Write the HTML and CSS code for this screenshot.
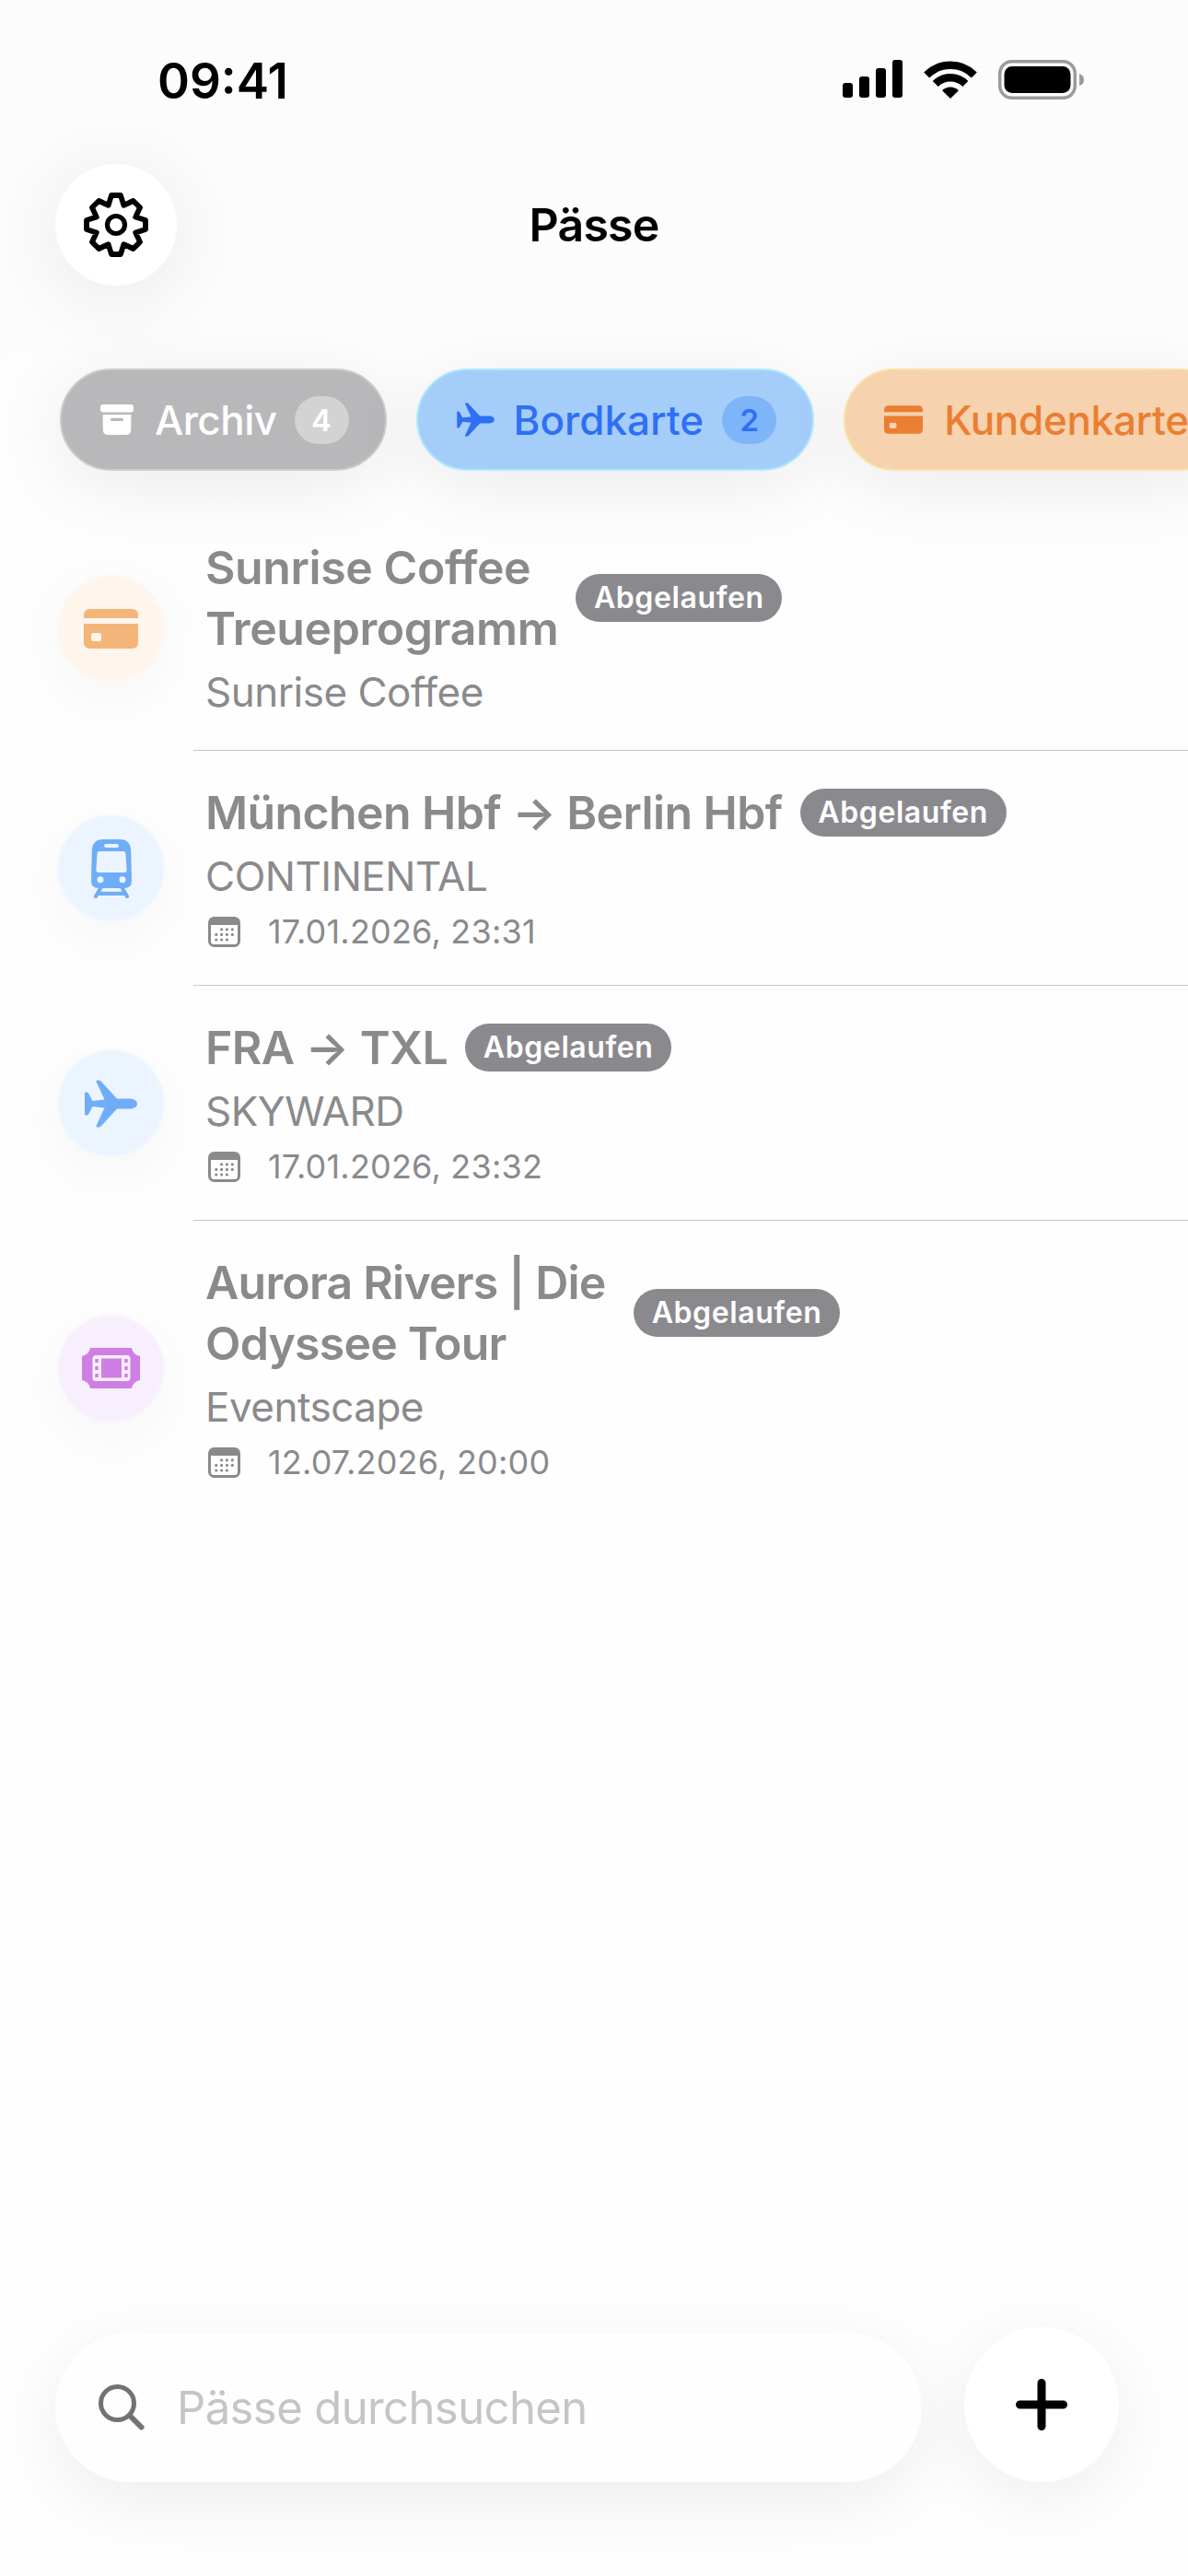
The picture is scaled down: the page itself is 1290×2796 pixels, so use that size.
FILE: index.html
```html
<!DOCTYPE html>
<html lang="de">
<head>
    <meta charset="UTF-8">
    <meta name="viewport" content="width=device-width, initial-scale=1.0">
    <title>Pässe</title>
    <link rel="stylesheet" href="styles.css">
</head>
<body>
    <!-- Icons -->
    <svg width="0" height="0" class="sprite">
        <symbol id="plane" viewBox="0 -26 57 52">
            <path d="M0-11.5Q0-12.5 1-12.5H2.5Q3.5-12.5 4-11.5L8.5-3 21.5-4.5 12.5-24Q12-25.5 13.5-25.5H15.5Q17-25.5 18-24L35-5.5H49C54-5.5 57-3 57 0S54 5.5 49 5.5H35L18 24Q17 25.5 15.5 25.5H13.5Q12 25.5 12.5 24L21.5 4.5 8.5 3 4 11.5Q3.5 12.5 2.5 12.5H1Q0 12.5 0 11.5Z"/>
        </symbol>
        <symbol id="card" viewBox="0 0 59 43">
            <path fill-rule="evenodd" d="M0 10V7Q0 0 7 0H52Q59 0 59 7V10ZM0 16H59V36Q59 43 52 43H7Q0 43 0 36ZM10.500 26Q8 26 8 28.500V32.500Q8 35 10.500 35H16.500Q19 35 19 32.500V28.500Q19 26 16.500 26Z"/>
        </symbol>
        <symbol id="calendar" viewBox="0 0 35 33">
            <rect x="1.500" y="1.500" width="32" height="30" rx="5" fill="none" stroke="currentColor" stroke-width="3"/>
            <path d="M1 9V5Q1 1 5 1H30Q34 1 34 5V9Z"/>
            <path fill="none" stroke="currentColor" stroke-width="3.200" stroke-linecap="round" d="M14.600 13.800h.01M20.400 13.800h.01M26.300 13.800h.01M8.800 19.400h.01M14.600 19.400h.01M20.400 19.400h.01M26.300 19.400h.01M8.800 25h.01M14.600 25h.01M20.400 25h.01"/>
        </symbol>
    </svg>

    <div class="status-bar">
        <span class="time">09:41</span>
        <div class="status-icons">
            <svg width="65" height="42" viewBox="0 0 65 42">
                <rect x="0" y="25" width="11" height="16" rx="3"/>
                <rect x="18" y="18" width="11" height="23" rx="3"/>
                <rect x="36" y="9" width="11" height="32" rx="3"/>
                <rect x="54" y="0" width="11" height="41" rx="3"/>
            </svg>
            <svg width="58" height="43" viewBox="0 0 58 43">
                <g fill="none" stroke="#000" stroke-width="8.500">
                    <path d="M3.200 16.500A36.500 36.500 0 0 1 54.800 16.500"/>
                    <path d="M12.700 26A23 23 0 0 1 45.300 26"/>
                </g>
                <path d="M29 42L20.100 33.200A12.700 12.700 0 0 1 37.900 33.200Z"/>
            </svg>
            <svg width="93" height="43" viewBox="0 0 93 43">
                <rect x="1.750" y="1.750" width="81.500" height="39.500" rx="13" fill="none" stroke="#9b9b9b" stroke-width="3.500"/>
                <rect x="6.500" y="7" width="72" height="29" rx="8.500"/>
                <path d="M88 15Q93 16.500 93 21.500T88 28Z" fill="#9b9b9b"/>
            </svg>
        </div>
    </div>

    <div class="nav">
        <button class="round settings">
            <svg width="72" height="72" viewBox="-36 -36 72 72" fill="none" stroke="#000" stroke-linejoin="round">
                <path stroke-width="5.800" d="M-5-32H5L8.400-21.200 18.700-26 26-18.700 21.200-8.400 32-5V5L21.200 8.400 26 18.700 18.700 26 8.400 21.200 5 32H-5L-8.400 21.200-18.700 26-26 18.700-21.200 8.400-32 5V-5L-21.200-8.400-26-18.700-18.700-26-8.400-21.200Z"/>
                <circle r="9.500" stroke-width="5.200"/>
            </svg>
        </button>
        <h1>Pässe</h1>
    </div>

    <div class="filters">
        <div class="chip chip-gray">
            <svg width="36" height="33" viewBox="0 0 36 33">
                <rect width="36" height="8.500" rx="3"/>
                <path fill-rule="evenodd" d="M2.700 11H33.300V27Q33.300 33 27.300 33H8.700Q2.700 33 2.700 27ZM12.500 14.700Q11 14.700 11 16.400T12.500 18H23.500Q25 18 25 16.400T23.500 14.700Z"/>
            </svg>
            <span class="label">Archiv</span>
            <span class="count">4</span>
        </div>
        <div class="chip chip-blue">
            <svg width="41" height="37"><use href="#plane"/></svg>
            <span class="label">Bordkarte</span>
            <span class="count">2</span>
        </div>
        <div class="chip chip-orange">
            <svg width="42" height="31"><use href="#card"/></svg>
            <span class="label">Kundenkarte</span>
        </div>
    </div>

    <div class="list">
        <div class="row">
            <div class="avatar orange"><svg width="59" height="43"><use href="#card"/></svg></div>
            <div class="content">
                <div class="title-line">
                    <h2>Sunrise Coffee<br>Treueprogramm</h2>
                    <span class="badge">Abgelaufen</span>
                </div>
                <p class="sub">Sunrise Coffee</p>
            </div>
        </div>
        <div class="row">
            <div class="avatar blue">
                <svg width="44" height="64" viewBox="0 0 44 64">
                    <path fill-rule="evenodd" d="M0 45L.8 12Q1.500 0 13 0H31Q42.500 0 43.200 12L44 45Q44 53 36 53H8Q0 53 0 45ZM16 5Q14 5 14 7T16 9H28Q30 9 30 7T28 5ZM9 13Q6.800 13 6.600 15L5.400 33Q5.200 36 8 36H36Q38.800 36 38.600 33L37.400 15Q37.200 13 35 13ZM10 40.300A3.500 3.500 0 1 0 10 47.300A3.500 3.500 0 1 0 10 40.300ZM34 40.300A3.500 3.500 0 1 0 34 47.300A3.500 3.500 0 1 0 34 40.300Z"/>
                    <path fill="none" stroke="currentColor" stroke-width="4.200" stroke-linecap="round" d="M10.500 52.500L5 62M33.500 52.500L39 62M8 58.800H36"/>
                </svg>
            </div>
            <div class="content">
                <div class="title-line">
                    <h2 class="route">München Hbf → Berlin Hbf</h2>
                    <span class="badge">Abgelaufen</span>
                </div>
                <p class="sub">CONTINENTAL</p>
                <p class="date"><svg width="35" height="33"><use href="#calendar"/></svg><span>17.01.2026, 23:31</span></p>
            </div>
        </div>
        <div class="row">
            <div class="avatar blue"><svg width="57" height="52"><use href="#plane"/></svg></div>
            <div class="content">
                <div class="title-line">
                    <h2 class="route">FRA → TXL</h2>
                    <span class="badge">Abgelaufen</span>
                </div>
                <p class="sub">SKYWARD</p>
                <p class="date"><svg width="35" height="33"><use href="#calendar"/></svg><span>17.01.2026, 23:32</span></p>
            </div>
        </div>
        <div class="row">
            <div class="avatar purple">
                <svg width="63" height="44" viewBox="0 0 63 44">
                    <path fill-rule="evenodd" d="M9 0H54Q55 7 63 9V35Q55 37 54 44H9Q8 37 0 35V9Q8 7 9 0ZM15 8Q11.500 8 11.500 11.500V32.500Q11.500 36 15 36H49Q52.500 36 52.500 32.500V11.500Q52.500 8 49 8Z"/>
                    <path d="M21 11.500H43V32.500H21ZM14.300 12H17.800V16H14.300ZM14.300 20H17.800V24H14.300ZM14.300 28H17.800V32H14.300ZM46.200 12H49.700V16H46.200ZM46.200 20H49.700V24H46.200ZM46.200 28H49.700V32H46.200Z"/>
                </svg>
            </div>
            <div class="content">
                <div class="title-line">
                    <h2 class="wide">Aurora Rivers | Die<br>Odyssee Tour</h2>
                    <span class="badge">Abgelaufen</span>
                </div>
                <p class="sub">Eventscape</p>
                <p class="date"><svg width="35" height="33"><use href="#calendar"/></svg><span>12.07.2026, 20:00</span></p>
            </div>
        </div>
    </div>

    <div class="bottom-bar">
        <div class="search">
            <svg width="50" height="50" viewBox="0 0 50 50" fill="none" stroke="#727272" stroke-linecap="round">
                <circle cx="20.500" cy="20.500" r="18" stroke-width="5"/>
                <path d="M34 34L46.500 46.500" stroke-width="6"/>
            </svg>
            <span>Pässe durchsuchen</span>
        </div>
        <button class="round add">
            <svg width="56" height="56" viewBox="0 0 56 56" stroke="#000" stroke-width="9" stroke-linecap="round">
                <path d="M28 4.500V51.500M4.500 28H51.500"/>
            </svg>
        </button>
    </div>
</body>
</html>
```
FILE: styles.css
```css
* {
    box-sizing: border-box;
}
body {
    margin: 0;
    width: 1290px;
    height: 2796px;
    overflow: hidden;
    display: flex;
    flex-direction: column;
    font-family: Inter, "Liberation Sans", sans-serif;
    background: linear-gradient(#fcfcfc, #fdfdfd 400px, #fefefe 700px);
    color: #000;
}
h1, h2, p {
    margin: 0;
}
button {
    border: none;
    padding: 0;
}
svg {
    display: block;
    flex: none;
    fill: currentColor;
}
svg[fill="none"] {
    fill: none;
}
.sprite {
    position: absolute;
}

/* Status bar */
.status-bar {
    height: 178px;
    padding: 65px 113px 0 171px;
    display: flex;
    justify-content: space-between;
    align-items: flex-start;
}
.time {
    font-size: 53px;
    font-weight: 600;
    line-height: 46px;
}
.status-icons {
    display: flex;
    gap: 23px;
}

/* Navigation */
.nav {
    height: 132px;
    padding: 0 60px;
    display: grid;
    grid-template-columns: 132px 1fr 132px;
    align-items: center;
}
.round {
    display: flex;
    align-items: center;
    justify-content: center;
    border-radius: 50%;
    background: #fff;
    color: #000;
}
.settings {
    width: 132px;
    height: 132px;
    box-shadow: 0 12px 100px rgba(0, 0, 0, 0.09);
}
h1 {
    font-size: 50px;
    font-weight: 600;
    letter-spacing: -0.8px;
    text-align: center;
}

/* Filter chips */
.filters {
    display: flex;
    gap: 32px;
    padding: 90px 0 38px 65px;
    overflow-x: clip;
}
.chip {
    flex: none;
    height: 111px;
    padding: 0 39px 0 42px;
    display: flex;
    align-items: center;
    border: 2px solid;
    border-radius: 56px;
    font-size: 44px;
    font-weight: 500;
    box-shadow: 0 14px 80px rgba(0, 0, 0, 0.08);
}
.count {
    width: 59px;
    height: 52px;
    border-radius: 26px;
    font-size: 33px;
    font-weight: 600;
    line-height: 52px;
    text-align: center;
}
.chip-gray {
    background: #b8b8ba;
    border-color: #cbcbcc;
    color: #fff;
}
.chip-gray .label {
    margin: 0 19px 0 23px;
    letter-spacing: -0.5px;
}
.chip-gray .count {
    background: #d3d3d4;
}
.chip-blue {
    background: #a5cdf9;
    border-color: #b0e8ff;
    color: #2f6ff5;
}
.chip-blue .label {
    margin: 0 20px 0 21px;
}
.chip-blue .count {
    background: #7db5f8;
}
.chip-orange {
    width: 420px;
    background: #f6d2ae;
    border-color: #fbe1a4;
    color: #ea7e31;
}
.chip-orange .label {
    margin-left: 23px;
    letter-spacing: -0.3px;
}

/* Pass list */
.row {
    display: flex;
    padding-left: 62px;
}
.avatar {
    flex: none;
    align-self: center;
    width: 117px;
    height: 117px;
    margin-right: 31px;
    display: flex;
    align-items: center;
    justify-content: center;
    border: 2px solid rgba(255, 255, 255, 0.3);
    border-radius: 50%;
    box-shadow: 0 18px 70px rgba(0, 0, 0, 0.04);
}
.orange {
    background: #fef5ed;
    color: #f3b57a;
}
.blue {
    background: #ecf5ff;
    color: #70adf9;
}
.purple {
    background: #f8effe;
    color: #cf7fe4;
}
.content {
    flex: 1;
    padding: 34px 0 33px 13px;
    border-bottom: 1px solid #c8c8ca;
    color: #8a8a8c;
}
.row:last-child .content {
    border-bottom: none;
}
.title-line {
    display: flex;
    align-items: center;
    gap: 19px;
}
h2 {
    font-size: 50px;
    font-weight: 600;
    line-height: 66px;
    letter-spacing: -0.4px;
}
h2.route {
    letter-spacing: -0.6px;
}
h2.wide {
    width: 446px;
    letter-spacing: -0.8px;
}
.badge {
    width: 224px;
    height: 52px;
    border-radius: 26px;
    background: #8a8a8e;
    color: #fff;
    font-size: 32px;
    font-weight: 600;
    line-height: 52px;
    letter-spacing: 0.6px;
    text-align: center;
}
.sub {
    margin-top: 6px;
    font-size: 44px;
    line-height: 60px;
    letter-spacing: -0.5px;
}
.date {
    margin-top: 6px;
    padding-left: 3px;
    display: flex;
    align-items: center;
    gap: 30px;
    font-size: 36px;
    line-height: 49px;
    letter-spacing: 0.2px;
}

/* Bottom bar */
.bottom-bar {
    margin-top: auto;
    padding: 0 75px 102px 60px;
    display: flex;
    align-items: flex-end;
    justify-content: space-between;
}
.search {
    width: 941px;
    height: 162px;
    padding-left: 47px;
    display: flex;
    align-items: center;
    gap: 35px;
    border-radius: 81px;
    background: #fefefe;
    color: #c5c5c7;
    font-size: 49px;
    letter-spacing: -0.6px;
    box-shadow: 0 20px 80px rgba(0, 0, 0, 0.07);
}
.add {
    width: 168px;
    height: 168px;
    box-shadow: 0 16px 80px rgba(0, 0, 0, 0.07);
}
```
